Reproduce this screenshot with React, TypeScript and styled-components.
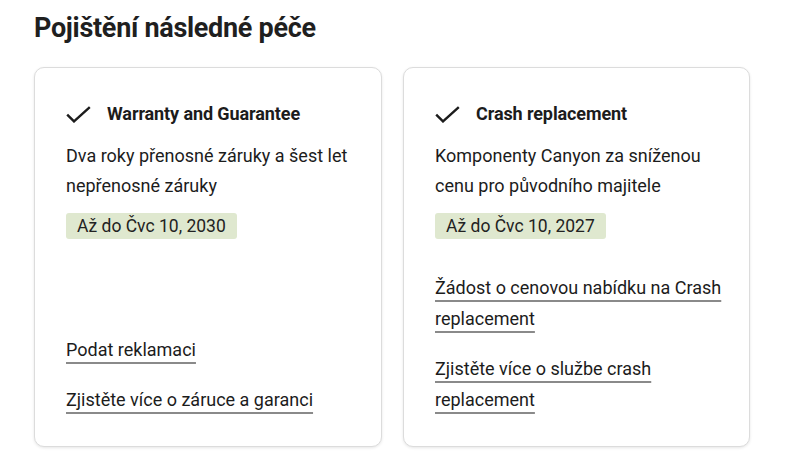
import React from "react";
import styled, { createGlobalStyle } from "styled-components";

const GlobalStyle = createGlobalStyle`
  html, body { margin: 0; padding: 0; background: #ffffff; }
  body { font-family: Roboto, "Liberation Sans", Arial, sans-serif; color: #1c1c1c; }
  * { box-sizing: border-box; }
`;

const Page = styled.div`
  width: 800px;
  height: 463px;
  padding: 10px 0 0 34px;
  overflow: hidden;
`;

const Heading = styled.h2`
  margin: 0;
  font-size: 27px;
  line-height: 36px;
  font-weight: 700;
  color: #1f1f1f;
  letter-spacing: -0.3px;
`;

const Grid = styled.div`
  display: grid;
  grid-template-columns: 348px 347px;
  column-gap: 21px;
  margin-top: 21px;
`;

const Card = styled.section`
  display: flex;
  flex-direction: column;
  height: 380px;
  padding: 34px 18px 31px 31px;
  border: 1px solid #dcdcdc;
  border-radius: 10px;
  box-shadow: 0 1px 3px rgba(0, 0, 0, 0.1);
  background: #fff;
`;

const TitleRow = styled.div`
  display: flex;
  align-items: center;
  gap: 16px;
  height: 24px;
`;

const CheckIcon = () => (
  <svg width="25" height="17" viewBox="0 0 25 17" fill="none">
    <path d="M1.2 8.6 L8 15.4 L23.8 1.2" stroke="#1c1c1c" strokeWidth="2.4" strokeLinecap="butt" strokeLinejoin="miter" />
  </svg>
);

const CardTitle = styled.h3`
  margin: 0;
  font-size: 18px;
  font-weight: 700;
  line-height: 24px;
  color: #1c1c1c;
  letter-spacing: -0.1px;
`;

const Description = styled.p`
  margin: 15px 0 0 0;
  max-width: 290px;
  font-size: 18px;
  line-height: 30px;
  color: #1c1c1c;
`;

const Badge = styled.span`
  align-self: flex-start;
  margin-top: 12px;
  padding: 0 11px;
  height: 26px;
  line-height: 26px;
  font-size: 17.5px;
  background: #dfe8cf;
  border-radius: 3px;
  color: #222;
`;

const Links = styled.div`
  margin-top: auto;
  display: flex;
  flex-direction: column;
  gap: 19px;
`;

const LinkText = styled.a`
  font-size: 18px;
  line-height: 31px;
  color: #1c1c1c;
  text-decoration: underline;
  text-decoration-color: #8a8a8a;
  text-decoration-thickness: 2px;
  text-underline-offset: 6px;
  cursor: pointer;
`;

type Item = {
  title: string;
  desc: string;
  until: string;
  links: string[];
};

const items: Item[] = [
  {
    title: "Warranty and Guarantee",
    desc: "Dva roky přenosné záruky a šest let nepřenosné záruky",
    until: "Až do Čvc 10, 2030",
    links: ["Podat reklamaci", "Zjistěte více o záruce a garanci"],
  },
  {
    title: "Crash replacement",
    desc: "Komponenty Canyon za sníženou cenu pro původního majitele",
    until: "Až do Čvc 10, 2027",
    links: [
      "Žádost o cenovou nabídku na Crash replacement",
      "Zjistěte více o službe crash replacement",
    ],
  },
];

export default function App() {
  return (
    <>
      <GlobalStyle />
      <Page>
        <Heading>Pojištění následné péče</Heading>
        <Grid>
          {items.map((it) => (
            <Card key={it.title}>
              <TitleRow>
                <CheckIcon />
                <CardTitle>{it.title}</CardTitle>
              </TitleRow>
              <Description>{it.desc}</Description>
              <Badge>{it.until}</Badge>
              <Links>
                {it.links.map((l) => (
                  <div key={l}>
                    <LinkText>{l}</LinkText>
                  </div>
                ))}
              </Links>
            </Card>
          ))}
        </Grid>
      </Page>
    </>
  );
}
